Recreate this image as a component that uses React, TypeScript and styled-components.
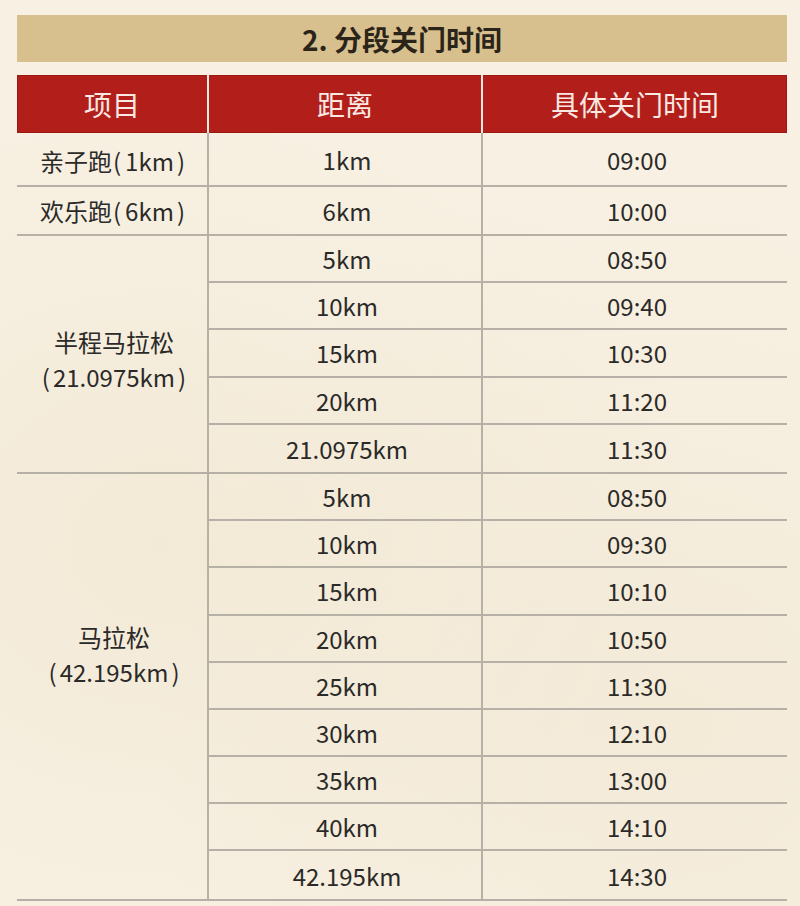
import React from "react";
import styled, { createGlobalStyle } from "styled-components";

const GlobalStyle = createGlobalStyle`
  html, body {
    margin: 0;
    padding: 0;
    background: #f8f1e3;
  }
  body {
    font-family: "Noto Sans CJK SC", "Noto Sans", sans-serif;
    color: #2b2a28;
  }
`;

const Page = styled.div`
  width: 800px;
  height: 906px;
  box-sizing: border-box;
  padding: 15px 13px 0 17px;
  background:
    radial-gradient(ellipse at 20% 60%, rgba(236, 224, 200, 0.45), transparent 60%),
    radial-gradient(ellipse at 85% 80%, rgba(236, 224, 200, 0.4), transparent 55%),
    #f8f1e3;
  overflow: hidden;
`;

const TitleBar = styled.div`
  height: 47px;
  margin-bottom: 13px;
  background: #d8bf8e;
  display: flex;
  align-items: center;
  justify-content: center;
  font-size: 28px;
  font-weight: 700;
  color: #2a2419;
`;

const Header = styled.div`
  height: 58px;
  display: flex;
  background: #b21f1b;
  box-shadow: inset 0 0 0 1px #9c1814;
`;

const HeadCell = styled.div<{ $w: number; $first?: boolean }>`
  width: ${(p) => p.$w}px;
  box-sizing: border-box;
  display: flex;
  align-items: center;
  justify-content: center;
  color: #f9e9e2;
  font-size: 28px;
  border-left: ${(p) => (p.$first ? "none" : "2px solid #f3e9dc")};
`;

const Group = styled.div`
  display: flex;
  border-bottom: 2px solid #b6b0a6;
`;

const NameCell = styled.div<{ $shift: number }>`
  width: 190px;
  display: flex;
  flex-direction: column;
  align-items: center;
  justify-content: center;
  font-size: 24px;
  line-height: 35px;
  box-sizing: border-box;
  padding-left: 4px;
  padding-top: ${(p) => Math.max(p.$shift, 0) * 2}px;
  padding-bottom: ${(p) => Math.max(-p.$shift, 0) * 2}px;
`;

const Paren = styled.span<{ $tight?: boolean }>`
  margin: ${(p) => (p.$tight ? "0 4px 0 1px" : "0 3px")};
`;

const RowsCol = styled.div`
  display: flex;
  flex-direction: column;
`;

const Row = styled.div<{ $h: number; $last: boolean }>`
  display: flex;
  height: ${(p) => p.$h}px;
  box-sizing: border-box;
  border-bottom: ${(p) => (p.$last ? "none" : "2px solid #b6b0a6")};
`;

const DataCell = styled.div<{ $w: number }>`
  width: ${(p) => p.$w}px;
  box-sizing: border-box;
  border-left: 2px solid #b6b0a6;
  display: flex;
  align-items: center;
  justify-content: center;
  font-size: 24px;
  padding-left: 4px;
`;

type GroupData = {
  title: string;
  note: string;
  inline: boolean;
  shift: number;
  h: number;
  rows: [string, string][];
};

const groups: GroupData[] = [
  { title: "亲子跑", note: "1km", inline: true, shift: 1, h: 52, rows: [["1km", "09:00"]] },
  { title: "欢乐跑", note: "6km", inline: true, shift: 0, h: 47, rows: [["6km", "10:00"]] },
  {
    title: "半程马拉松",
    note: "21.0975km",
    inline: false,
    shift: 5,
    h: 47.2,
    rows: [
      ["5km", "08:50"],
      ["10km", "09:40"],
      ["15km", "10:30"],
      ["20km", "11:20"],
      ["21.0975km", "11:30"],
    ],
  },
  {
    title: "马拉松",
    note: "42.195km",
    inline: false,
    shift: -32,
    h: 47.2,
    rows: [
      ["5km", "08:50"],
      ["10km", "09:30"],
      ["15km", "10:10"],
      ["20km", "10:50"],
      ["25km", "11:30"],
      ["30km", "12:10"],
      ["35km", "13:00"],
      ["40km", "14:10"],
      ["42.195km", "14:30"],
    ],
  },
];

const Note = ({ text, tight }: { text: string; tight?: boolean }) => (
  <span>
    <Paren $tight={tight}>(</Paren>
    {text}
    <Paren>)</Paren>
  </span>
);

export default function App() {
  return (
    <>
      <GlobalStyle />
      <Page>
        <TitleBar>2. 分段关门时间</TitleBar>
        <Header>
          <HeadCell $w={190} $first>
            项目
          </HeadCell>
          <HeadCell $w={274}>距离</HeadCell>
          <HeadCell $w={306}>具体关门时间</HeadCell>
        </Header>
        {groups.map((g) => (
          <Group key={g.title}>
            <NameCell $shift={g.shift}>
              {g.inline ? (
                <span>
                  {g.title}
                  <Note text={g.note} tight />
                </span>
              ) : (
                <>
                  <span>{g.title}</span>
                  <Note text={g.note} />
                </>
              )}
            </NameCell>
            <RowsCol>
              {g.rows.map(([dist, time], i) => (
                <Row key={dist} $h={g.h} $last={i === g.rows.length - 1}>
                  <DataCell $w={274}>{dist}</DataCell>
                  <DataCell $w={306}>{time}</DataCell>
                </Row>
              ))}
            </RowsCol>
          </Group>
        ))}
      </Page>
    </>
  );
}
